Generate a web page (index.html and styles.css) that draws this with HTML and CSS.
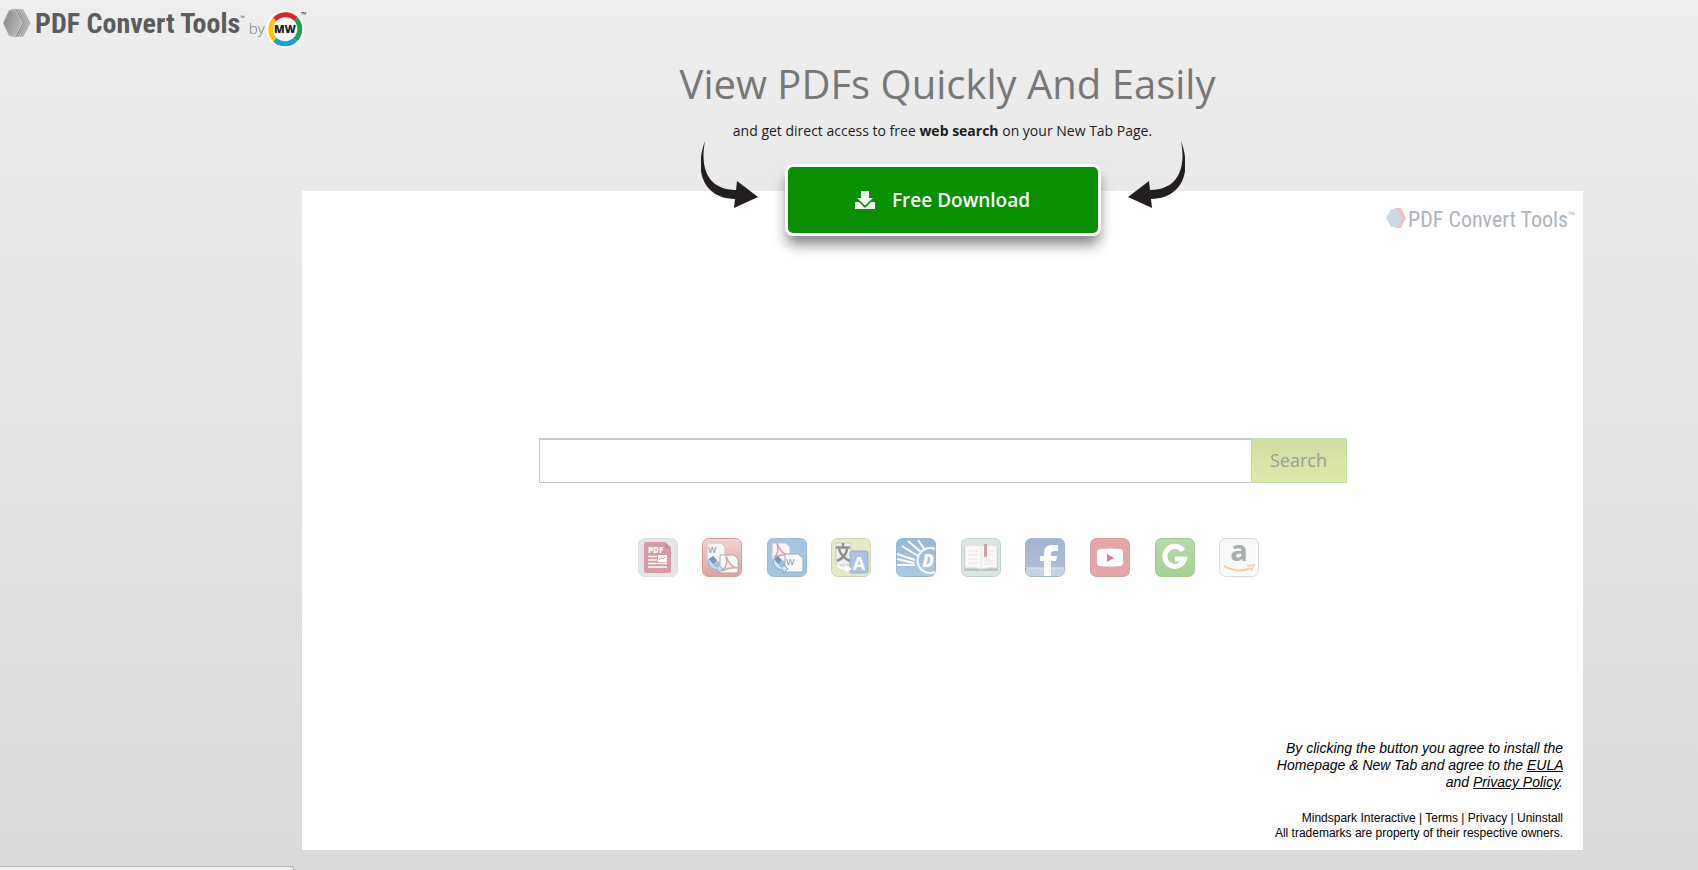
FILE: index.html
```html
<!DOCTYPE html>
<html lang="en">
<head>
<meta charset="utf-8">
<title>PDF Convert Tools</title>
<link rel="stylesheet" href="styles.css">
</head>
<body>
<header class="site-header">
  <svg class="hex" width="28" height="28" viewBox="0 0 28 28" aria-hidden="true">
    <defs><linearGradient id="hx" x1="0" y1="0" x2="1" y2="0.4"><stop offset="0" stop-color="#858585"/><stop offset="1" stop-color="#b8b8b8"/></linearGradient></defs>
    <g stroke="#dedede" stroke-width="0.6">
      <path d="M14 0h6l7.500 14-7.500 14h-6z" fill="#a2a2a2"/>
      <path d="M12 0h6l7.500 14-7.500 14h-6z" fill="#9a9a9a"/>
      <path d="M10 0h6l7.500 14-7.500 14h-6z" fill="#949494"/>
      <path d="M8 0h6l7.500 14-7.500 14h-6z" fill="#8e8e8e"/>
      <path d="M6 1h6l7.500 13-7.500 13H6L0 14z" fill="url(#hx)"/>
    </g>
  </svg>
  <span class="logo-name">PDF Convert Tools</span>
  <span class="logo-tm">™</span>
  <span class="logo-by">by</span>
  <svg class="mw" width="40" height="38" viewBox="0 0 40 38" role="img" aria-label="MW">
    <circle cx="18" cy="19" r="19" fill="#fff"/>
    <g fill="none" stroke-width="5">
      <path d="M7.700 9.400A14.800 14.800 0 0 1 28.800 8.900" stroke="#d9232e"/>
      <path d="M28.800 8.900A14.800 14.800 0 0 1 28.300 29.600" stroke="#22a24a"/>
      <path d="M28.300 29.600A14.800 14.800 0 0 1 7.700 29.600" stroke="#1b9fdc"/>
      <path d="M7.700 29.600A14.800 14.800 0 0 1 7.700 9.400" stroke="#fdc70c"/>
    </g>
    <text x="18" y="23" text-anchor="middle" class="mw-text">MW</text>
    <text x="34" y="7" class="mw-tm">™</text>
  </svg>
</header>

<main class="page">
  <section class="hero">
    <h1 class="title">View PDFs Quickly And Easily</h1>
    <p class="subtitle">and get direct access to free <b>web search</b> on your New Tab Page.</p>
    <div class="cta-row">
      <svg class="arrow" width="57" height="67" viewBox="0 0 57 67" aria-hidden="true"><path id="arr" fill="#231f20" d="M4 0C-1 26 6 49 35 49L36 40L57 56L33 67L34 58C2 57-7 30 4 0Z"/></svg>
      <button class="download" type="button">
        <svg width="20" height="18" viewBox="0 0 20 18" aria-hidden="true"><path fill="#fff" d="M6 0h8v7h4l-8 7.500L2 7h4zM0 11h4l6 6 6-6h4v7H0z"/></svg>
        <span>Free Download</span>
      </button>
      <svg class="arrow flip" width="57" height="67" viewBox="0 0 57 67" aria-hidden="true"><use href="#arr"/></svg>
    </div>
  </section>

  <section class="panel">
    <div class="brand">
      <svg width="20" height="20" viewBox="0 0 20 20" aria-hidden="true">
        <path d="M9 0h6l5 10-5 10H9z" fill="#f0c0c3"/>
        <path d="M5 1h7l5 9-5 9H5L0 10z" fill="#cfd8e5"/>
        <path d="M12 1l5 9-5 9" fill="none" stroke="#e6c3cc"/>
      </svg>
      <span class="brand-name">PDF Convert Tools</span><span class="brand-tm">™</span>
    </div>

    <form class="search">
      <input class="search-input" type="text" aria-label="Search the web">
      <button class="search-button" type="button">Search</button>
    </form>

    <div class="shortcuts">
      <svg viewBox="0 0 40 39" role="img" aria-label="PDF">
        <rect x=".5" y=".5" width="39" height="38" rx="6" fill="#e0e3e4" stroke="#d6d9d9"/>
        <path d="M8 4h19l6 6v23q0 2-2 2H8q-2 0-2-2V6q0-2 2-2z" fill="#d28a93"/>
        <path d="M27 4v6h6z" fill="#bf7881"/>
        <text x="10" y="15" class="pdf-text">PDF</text>
        <path d="M10 18.500h9M10 22h9M10 25.500h19M10 29h19" stroke="#fff" stroke-width="1.500"/>
        <path d="M20 17h9v7h-9z" fill="#fff"/><path d="M21 22l2-2 2 1 2-2" stroke="#d28a93" fill="none"/>
      </svg>
      <svg viewBox="0 0 40 39" role="img" aria-label="Word to PDF">
        <defs><linearGradient id="rd" x2="0" y2="1"><stop stop-color="#f4cccc"/><stop offset="1" stop-color="#df8f90"/></linearGradient></defs>
        <rect x=".5" y=".5" width="39" height="38" rx="6" fill="url(#rd)" stroke="#d58a8a"/>
        <path d="M5 5h14l4 4v15H5z" fill="#f5f6f7" stroke="#bcc0c3"/>
        <text x="6" y="15" class="w-text">W</text>
        <path d="M18 17h14l4 4v14H18z" fill="#fcfcfc" stroke="#999"/>
        <path d="M20 33q7-6 4-15 4 11 11 12-8-1-15 3" fill="none" stroke="#d98f98" stroke-width="1.500"/>
        <path d="M6 22l5-3 5 5-4 1q1 4 4 4v-3l5 5-5 4v-3q-10-1-10-10z" fill="#b8d5ee" stroke="#7da3c5"/>
        <path d="M7 21l4-3 4 4-4 4z" fill="#5f84ab"/>
      </svg>
      <svg viewBox="0 0 40 39" role="img" aria-label="PDF to Word">
        <rect x=".5" y=".5" width="39" height="38" rx="6" fill="#95bce0" stroke="#86aed4"/>
        <path d="M5 5h14l4 4v14H5z" fill="#f7f4f5" stroke="#b3b9c0"/>
        <path d="M7 20q6-6 3-15 4 11 11 12-8-1-14 3" fill="none" stroke="#d98f98" stroke-width="1.500"/>
        <path d="M18 16h13l5 4v14H18z" fill="#fafbfb" stroke="#8e9ba7"/>
        <text x="19" y="27" class="w-text">W</text>
        <path d="M6 22l5-3 5 5-4 1q1 4 4 4v-3l5 5-5 4v-3q-10-1-10-10z" fill="#c3e0f5" stroke="#7599bb"/>
        <path d="M7 21l4-3 4 4-4 4z" fill="#5d86ae"/>
      </svg>
      <svg viewBox="0 0 40 39" role="img" aria-label="Translate">
        <rect x=".5" y=".5" width="39" height="38" rx="6" fill="#e2e6bd" stroke="#c8cca6"/>
        <path d="M5 5h15v20l-5 2H5z" fill="#efefec" stroke="#c3c3bc"/>
        <path d="M5 9.500h14M12 5v4M16 11q-1 8-10 12M8 11q2 8 11 12" fill="none" stroke="#7b7e7e" stroke-width="2.500"/>
        <rect x="19" y="13" width="18" height="22" rx="2" fill="#9cb8e2" stroke="#869fc8"/>
        <text x="28" y="32" text-anchor="middle" class="a-text">A</text>
        <path d="M6 23q1 6 8 6v-3l7 5-7 4v-3Q4 32 6 23z" fill="#fff" stroke="#d4d4c8" stroke-width=".5"/>
      </svg>
      <svg viewBox="0 0 40 39" role="img" aria-label="Dictionary">
        <defs><linearGradient id="bl" x2="0" y2="1"><stop stop-color="#86abcf"/><stop offset="1" stop-color="#9ac3df"/></linearGradient></defs>
        <rect x=".5" y=".5" width="39" height="38" rx="6" fill="url(#bl)" stroke="#84a9ca"/>
        <g stroke="#fff" stroke-width="2" fill="none"><path d="M22 2l7 10M12 3l13 11M6 8l16 10M1 16l18 6M1 21l17 4M1 27h18"/><path d="M39 11A12.500 12.500 0 1 0 39 34"/></g>
        <text x="32" y="29" text-anchor="middle" class="d-text">D</text>
      </svg>
      <svg viewBox="0 0 40 39" role="img" aria-label="Books">
        <rect x=".5" y=".5" width="39" height="38" rx="6" fill="#d3e2dc" stroke="#b8ccc3"/>
        <path d="M3 9h34v24H3z" fill="#aebcb6"/>
        <path d="M4 8q9-2 16 0 8-2 16 0v22q-8-1-16 1-7-2-16-1z" fill="#fbfaf7" stroke="#d7dcd8"/>
        <path d="M20 8v23M7 13h10M7 17h10M7 21h10M7 25h10M27 13h6M27 17h6M23 23h10M23 26h10" stroke="#e4e0dc"/>
        <path d="M23 6h3v14l-1.500-2L23 20z" fill="#cb9192"/>
      </svg>
      <svg viewBox="0 0 40 39" role="img" aria-label="Facebook">
        <defs><linearGradient id="fb" x2="0" y2="1"><stop stop-color="#93a5c7"/><stop offset="1" stop-color="#a6b6d3"/></linearGradient></defs>
        <rect x=".5" y=".5" width="39" height="38" rx="6" fill="url(#fb)" stroke="#94a5c5"/>
        <path d="M1 30h38v3q0 5-5 5H6q-5 0-5-5z" fill="#bccce6"/><path d="M1 30h38" stroke="#d7e1f1"/>
        <path d="M19 38V23h-4v-5h4v-3q0-8 8-8h6v6h-4q-3 0-3 3v2h6l-1 5h-5v15z" fill="#fff"/>
      </svg>
      <svg viewBox="0 0 40 39" role="img" aria-label="YouTube">
        <rect x=".5" y=".5" width="39" height="38" rx="6" fill="#df979b" stroke="#d0898c"/>
        <path d="M10 11q10-1 20 0 3 0 3 4v9q0 4-3 4-10 1-20 0-3 0-3-4v-9q0-4 3-4z" fill="#fff"/>
        <path d="M17 16l7 4-7 4z" fill="#d1686f"/>
      </svg>
      <svg viewBox="0 0 40 39" role="img" aria-label="Games">
        <defs><linearGradient id="gr" x2="0" y2="1"><stop stop-color="#afd59d"/><stop offset="1" stop-color="#95cb81"/></linearGradient></defs>
        <rect x=".5" y=".5" width="39" height="38" rx="6" fill="url(#gr)" stroke="#8dc079"/>
        <path d="M28 12.500A10 10 0 1 0 29.500 21H20" fill="none" stroke="#fff" stroke-width="5"/>
      </svg>
      <svg viewBox="0 0 40 39" role="img" aria-label="Amazon">
        <rect x=".5" y=".5" width="39" height="38" rx="6" fill="#f7f8f8" stroke="#d4d5d5"/>
        <text x="20" y="23" text-anchor="middle" class="amz-text">a</text>
        <path d="M5 28q14 8 27 2" fill="none" stroke="#f2c596" stroke-width="2"/><path d="M28 28l7-1-3 6" fill="none" stroke="#f2c596" stroke-width="1.500"/>
      </svg>
    </div>

    <footer class="legal">
      <p class="agree">By clicking the button you agree to install the Homepage &amp; New Tab and agree to the <a href="#eula">EULA</a> and <a href="#policy">Privacy Policy</a>.</p>
      <p class="links"><a href="#mindspark">Mindspark Interactive</a> | <a href="#terms">Terms</a> | <a href="#privacy">Privacy</a> | <a href="#uninstall">Uninstall</a><br>All trademarks are property of their respective owners.</p>
    </footer>
  </section>
</main>
<div class="status"></div>
</body>
</html>
```
FILE: styles.css
```css
* { box-sizing: border-box; }
body {
  margin: 0;
  min-height: 100vh;
  background: linear-gradient(#eeeeee, #dadada) no-repeat #dadada;
  font-family: "Open Sans", "Noto Sans", sans-serif;
  color: #1b1b1b;
  overflow-x: hidden;
}
h1, p { margin: 0; }

.site-header {
  display: flex;
  align-items: flex-start;
  height: 57px;
  padding: 9px 0 0 3px;
  color: #5c5c5c;
}
.logo-name, .brand-name {
  font-family: "Liberation Sans Narrow", "Roboto Condensed", Roboto, sans-serif;
  font-weight: 700;
  white-space: nowrap;
}
.logo-name { margin-left: 4px; font-size: 28px; line-height: 30px; }
.logo-tm { margin-top: 5px; font-size: 6px; line-height: 8px; }
.logo-by { margin: 9px 2px 0 4px; font-size: 15px; line-height: 20px; font-weight: 300; color: #777; }
.mw { overflow: visible; margin-top: 1px; }
.mw-text { font: 800 11px "Open Sans", sans-serif; fill: #1c1c1c; }
.mw-tm { font: 700 7px "Open Sans", sans-serif; fill: #333; }

.page { margin: 0 115px 0 302px; }
.hero { position: relative; z-index: 1; text-align: center; }
.title {
  padding-left: 10px;
  font-size: 40px;
  line-height: 54px;
  font-weight: 400;
  color: #777777;
}
.subtitle { margin-top: 9px; font-size: 14px; line-height: 21px; }
.cta-row {
  display: flex;
  justify-content: center;
  align-items: flex-start;
  gap: 27px;
  margin-bottom: -45px;
}
.flip { transform: scaleX(-1); }
.download {
  display: flex;
  align-items: center;
  justify-content: center;
  gap: 17px;
  width: 316px;
  height: 72px;
  margin-top: 23px;
  border: 3px solid #fff;
  border-radius: 8px;
  background: #089000;
  color: #fff;
  font: 600 19px "Open Sans", sans-serif;
  box-shadow: 0 10px 14px -2px rgba(0, 0, 0, 0.5);
}

.panel { padding: 17px 20px 9px; background: #fff; }
.brand {
  display: flex;
  align-items: flex-start;
  justify-content: flex-end;
  margin-right: -12px;
  color: #aeb4bb;
}
.brand-name { margin-left: 2px; font-size: 22px; line-height: 24px; font-weight: 400; }
.brand-tm { font-size: 9px; line-height: 14px; }

.search { display: flex; width: 808px; max-width: 100%; height: 45px; margin: 206px auto 0; }
.search-input {
  flex: 1;
  min-width: 0;
  border: 1px solid #c6cacb;
  border-top-width: 2px;
  border-right: 0;
  background: #fff;
  font: 18px "Open Sans", sans-serif;
}
.search-button {
  width: 96px;
  padding-bottom: 3px;
  border: 1px solid #c5dfb5;
  background: linear-gradient(#cfdd9f, #e0e8ab);
  color: #9a9e94;
  font: 18px "Open Sans", sans-serif;
}
.shortcuts {
  display: flex;
  justify-content: space-between;
  width: 622px;
  max-width: 100%;
  margin: 55px auto 0;
  transform: translateX(6px);
}
.shortcuts svg { width: 40px; height: 39px; overflow: visible; opacity: 0.85; }
.pdf-text { font: 800 8px "Open Sans", sans-serif; fill: #fff; }
.w-text { font: 600 9px "Open Sans", sans-serif; fill: #7f95ad; }
.a-text { font: 700 18px "Open Sans", sans-serif; fill: #fff; }
.d-text { font: italic 800 17px "Open Sans", sans-serif; fill: #fff; }
.amz-text { font: 700 29px "Open Sans", sans-serif; fill: #9c9fa1; }

.legal {
  margin-top: 163px;
  font-family: "Liberation Sans", Arial, sans-serif;
  text-align: right;
  color: #000;
}
.legal a { color: inherit; }
.agree { width: 300px; margin-left: auto; font-size: 14px; line-height: 17px; font-style: italic; }
.links { margin-top: 20px; font-size: 12px; line-height: 15px; }
.links a { text-decoration: none; }

.status {
  position: fixed;
  left: 0;
  bottom: 0;
  width: 294px;
  height: 4px;
  border: solid #b7b7b7;
  border-width: 1px 1px 0 0;
  border-radius: 0 3px 0 0;
  background: #f0f0f0;
}
```
